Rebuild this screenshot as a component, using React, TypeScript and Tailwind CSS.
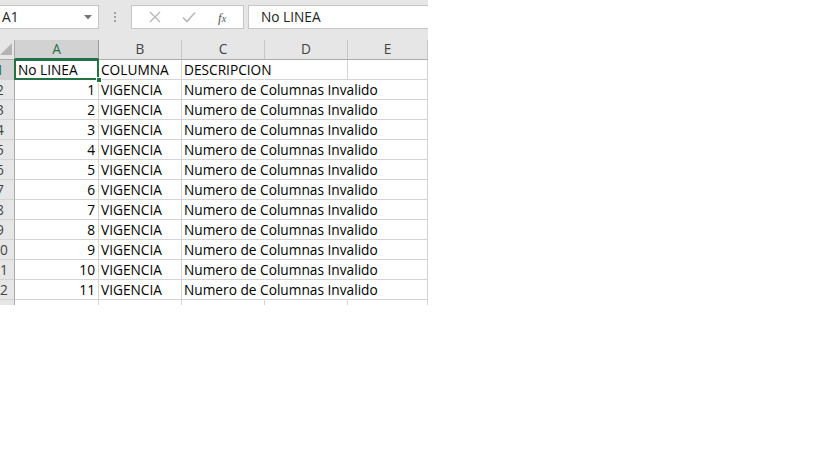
const COLS = ['A', 'B', 'C', 'D', 'E']
const COL_W = ['w-[84px]', 'w-[83px]', 'w-[83px]', 'w-[83px]', 'w-[80px]']

const rows: string[][] = [
  ['No LINEA', 'COLUMNA', 'DESCRIPCION', '', ''],
  ...Array.from({ length: 11 }, (_, i) => [String(i + 1), 'VIGENCIA', 'Numero de Columnas Invalido', '', '']),
]

// columns whose right gridline is hidden by overflowing text, per row
function hiddenRight(ri: number, ci: number) {
  if (ri === 0) return ci === 2
  return ci === 2 || ci === 3
}

function RowHeader({ n, active }: { n: number | null; active?: boolean }) {
  return (
    <div
      className={`w-[15px] shrink-0 overflow-hidden border-r border-b ${
        active ? 'bg-[#d2d2d2] border-r-[#217346] text-[#217346]' : 'bg-[#e6e6e6] border-r-[#ababab] text-[#444]'
      } border-b-[#d4d4d4]`}
    >
      <div className="w-[30px] -ml-[15px] text-center leading-[19px]">{n}</div>
    </div>
  )
}

export default function App() {
  return (
    <div className="w-[819px] h-[460px] bg-white" style={{ fontFamily: '"Open Sans", "Liberation Sans", sans-serif' }}>
      <div className="w-[428px] overflow-hidden text-[13.7px] text-black">
        {/* formula bar */}
        <div className="h-[40px] bg-[#e6e6e6] flex items-start pt-[5px]">
          <div className="w-[99px] h-[24px] bg-white border border-l-0 border-[#c6c6c6] flex items-center justify-between pl-[2px] pr-[6px]">
            <span className="text-[#222]">A1</span>
            <svg width="8" height="5" viewBox="0 0 8 5">
              <polygon points="0,0 8,0 4,4.5" fill="#777" />
            </svg>
          </div>
          <div className="w-[32px] h-[24px] flex items-center justify-center">
            <div className="flex flex-col gap-[2px]">
              <span className="w-[2px] h-[2px] bg-[#a0a0a0]" />
              <span className="w-[2px] h-[2px] bg-[#a0a0a0]" />
              <span className="w-[2px] h-[2px] bg-[#a0a0a0]" />
            </div>
          </div>
          <div className="w-[113px] h-[24px] bg-white border border-[#c6c6c6] flex items-center justify-around px-[6px]">
            <svg width="12" height="12" viewBox="0 0 12 12">
              <path d="M1 1 L11 11 M11 1 L1 11" stroke="#b8b8b8" strokeWidth="1.4" />
            </svg>
            <svg width="14" height="12" viewBox="0 0 14 12">
              <path d="M1 6.5 L5 10.5 L13 1.5" stroke="#b8b8b8" strokeWidth="1.6" fill="none" />
            </svg>
            <span className="text-[#555] italic text-[13px] leading-none" style={{ fontFamily: '"Liberation Serif", serif' }}>
              f<span className="text-[10px]">x</span>
            </span>
          </div>
          <div className="flex-1 ml-[4px] h-[24px] bg-white border border-r-0 border-[#c6c6c6] flex items-center pl-[12px] text-[#222]">
            No LINEA
          </div>
        </div>

        {/* column headers */}
        <div className="flex h-[20px]">
          <div className="w-[15px] shrink-0 bg-[#e6e6e6] border-r border-b border-[#ababab] flex items-end justify-start">
            <svg width="13" height="13" viewBox="0 0 13 13" className="mb-[3px]">
              <polygon points="12,0 12,12 0,12" fill="#b4b4b4" />
            </svg>
          </div>
          {COLS.map((c, i) => (
            <div
              key={c}
              className={`${COL_W[i]} shrink-0 flex items-center justify-center border-r ${
                i === 0
                  ? 'bg-[#d2d2d2] text-[#217346] border-b-2 border-b-[#217346] border-r-[#9e9e9e]'
                  : 'bg-[#e6e6e6] text-[#444] border-b border-b-[#ababab] border-r-[#c6c6c6]'
              }`}
            >
              {c}
            </div>
          ))}
        </div>

        {/* grid */}
        {rows.map((r, ri) => (
          <div key={ri} className="flex h-[20px]">
            <RowHeader n={ri + 1} active={ri === 0} />
            {r.map((v, ci) => {
              const numeric = ri > 0 && ci === 0
              return (
                <div
                  key={ci}
                  className={`${COL_W[ci]} shrink-0 relative border-r border-b border-[#d4d4d4] flex items-center whitespace-nowrap leading-[19px] ${
                    ci === 0 ? 'px-[3px]' : 'px-[2px]'
                  } ${numeric ? 'justify-end' : 'justify-start'} ${hiddenRight(ri, ci) ? 'border-r-transparent' : ''} ${
                    ci === 2 ? 'z-10' : ''
                  }`}
                >
                  {v}
                  {ri === 0 && ci === 0 && (
                    <>
                      <div className="absolute -left-px -top-px -right-px -bottom-px border-2 border-[#217346] pointer-events-none" />
                      <div className="absolute -right-[4px] -bottom-[4px] w-[6px] h-[6px] bg-[#217346] border border-white z-20" />
                    </>
                  )}
                </div>
              )
            })}
          </div>
        ))}
        <div className="flex h-[5px] overflow-hidden">
          <div className="w-[15px] shrink-0 bg-[#e6e6e6] border-r border-[#ababab]" />
          {COLS.map((c, i) => (
            <div key={c} className={`${COL_W[i]} shrink-0 border-r border-[#d4d4d4]`} />
          ))}
        </div>
      </div>
    </div>
  )
}
